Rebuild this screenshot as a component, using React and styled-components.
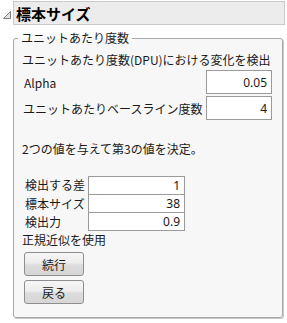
import styled, { createGlobalStyle } from "styled-components";

const GlobalStyle = createGlobalStyle`
  body {
    margin: 0;
    background: #ffffff;
    font-family: "Noto Sans", "Noto Sans CJK JP", sans-serif;
    font-size: 12px;
    color: #1a1a1a;
  }
`;

const Page = styled.div`
  width: 287px;
  height: 323px;
  padding: 1px 2px 0 3px;
  box-sizing: border-box;
`;

const TitleRow = styled.div`
  display: flex;
  align-items: center;
  gap: 2px;
`;

const Disclosure = styled.svg`
  width: 8px;
  height: 8px;
  flex: none;
  margin-top: 4px;
`;

const TitleBox = styled.div`
  flex: 1;
  height: 22px;
  display: flex;
  align-items: center;
  padding-left: 2px;
  background: #ececec;
  border: 1px solid #c9c9c9;
  font-family: "Noto Sans CJK JP", sans-serif;
  font-weight: bold;
  font-size: 15px;
  color: #000;
`;

const Group = styled.fieldset`
  margin: 5px 2px 0 10px;
  padding: 0 10px 13px 8px;
  border: 1px solid #a8a8a8;
  border-radius: 3px;
  background: #f7f7f7;
  box-shadow: 1px 1px 0 #c8c8c8;
`;

const Legend = styled.legend`
  margin-left: -4px;
  padding: 0 3px;
  font-family: "Noto Sans CJK JP", sans-serif;
  font-size: 12px;
  line-height: 16px;
`;

const Text = styled.div`
  font-family: "Noto Sans CJK JP", sans-serif;
  line-height: 16px;
  white-space: nowrap;
  margin-top: ${(p) => p.$top || 0}px;
`;

const FieldRow = styled.div`
  display: flex;
  align-items: center;
  justify-content: space-between;
  padding-left: ${(p) => p.$indent || 2}px;
  margin-top: ${(p) => p.$top || 0}px;
  font-family: "Noto Sans CJK JP", sans-serif;
  white-space: nowrap;
`;

const Field = styled.div`
  flex: none;
  width: 66px;
  height: 24px;
  box-sizing: border-box;
  background: #fff;
  border: 1px solid #9a9a9a;
  display: flex;
  align-items: center;
  justify-content: flex-end;
  padding-right: 4px;
  font-family: "Noto Sans", sans-serif;
`;

const Table = styled.div`
  display: grid;
  grid-template-columns: 63px 97px;
  margin-top: 19px;
  padding-left: 3px;
`;

const Label = styled.div`
  font-family: "Noto Sans CJK JP", sans-serif;
  height: 18px;
  line-height: 18px;
  white-space: nowrap;
`;

const Cell = styled.div`
  box-sizing: border-box;
  background: #fff;
  border: 1px solid #9a9a9a;
  border-top: ${(p) => (p.$first ? "1px solid #9a9a9a" : "none")};
  height: ${(p) => (p.$first ? 19 : 18)}px;
  text-align: right;
  padding-right: 4px;
  line-height: 17px;
  font-family: "Noto Sans", sans-serif;
`;

const Buttons = styled.div`
  display: flex;
  flex-direction: column;
  gap: 4px;
  margin-top: 4px;
  padding-left: 2px;
`;

const Button = styled.button`
  width: 60px;
  height: 24px;
  padding: 0;
  border: 1px solid #8e8e8e;
  border-radius: 3px;
  background: linear-gradient(#f6f6f6 0%, #ededed 45%, #dcdcdc 55%, #d6d6d6 100%);
  font-family: "Noto Sans CJK JP", sans-serif;
  font-size: 12px;
  color: #1a1a1a;
`;

const rows = [
  ["検出する差", "1"],
  ["標本サイズ", "38"],
  ["検出力", "0.9"],
];

export default function App() {
  return (
    <>
      <GlobalStyle />
      <Page>
        <TitleRow>
          <Disclosure viewBox="0 0 8 8">
            <path d="M7.5 0.5 L7.5 7.5 L0.5 7.5 Z" fill="#e2e2e2" stroke="#7d7d7d" strokeWidth="1" />
          </Disclosure>
          <TitleBox>標本サイズ</TitleBox>
        </TitleRow>
        <Group>
          <Legend>ユニットあたり度数</Legend>
          <Text $top={6}>ユニットあたり度数(DPU)における変化を検出</Text>
          <FieldRow $top={2}>
            <span>Alpha</span>
            <Field>0.05</Field>
          </FieldRow>
          <FieldRow $top={2} $indent={1}>
            <span>ユニットあたりベースライン度数</span>
            <Field>4</Field>
          </FieldRow>
          <Text $top={21}>2つの値を与えて第3の値を決定。</Text>
          <Table>
            {rows.map(([label, value], i) => [
              <Label key={label}>{label}</Label>,
              <Cell key={label + "v"} $first={i === 0}>
                {value}
              </Cell>,
            ])}
          </Table>
          <Text $top={1}>正規近似を使用</Text>
          <Buttons>
            <Button>続行</Button>
            <Button>戻る</Button>
          </Buttons>
        </Group>
      </Page>
    </>
  );
}
